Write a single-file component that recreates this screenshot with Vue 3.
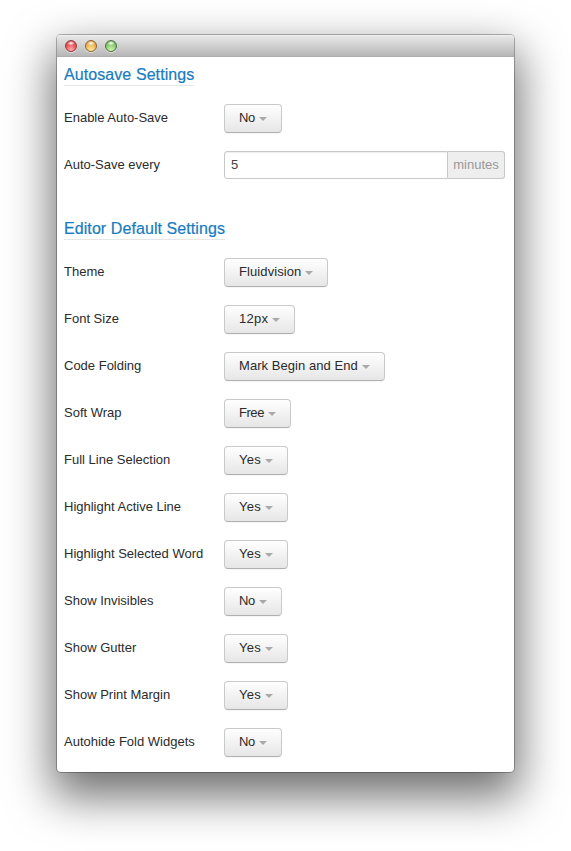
<script setup>
const sections = [
  {
    title: 'Autosave Settings',
    rows: [
      { label: 'Enable Auto-Save', value: 'No' },
      { label: 'Auto-Save every', input: '5', unit: 'minutes' },
    ],
  },
  {
    title: 'Editor Default Settings',
    rows: [
      { label: 'Theme', value: 'Fluidvision' },
      { label: 'Font Size', value: '12px' },
      { label: 'Code Folding', value: 'Mark Begin and End' },
      { label: 'Soft Wrap', value: 'Free' },
      { label: 'Full Line Selection', value: 'Yes' },
      { label: 'Highlight Active Line', value: 'Yes' },
      { label: 'Highlight Selected Word', value: 'Yes' },
      { label: 'Show Invisibles', value: 'No' },
      { label: 'Show Gutter', value: 'Yes' },
      { label: 'Show Print Margin', value: 'Yes' },
      { label: 'Autohide Fold Widgets', value: 'No' },
    ],
  },
]

const tracking = {
  No: -0.4,
  Yes: 0.3,
  Free: -0.45,
  '12px': 0.25,
  Fluidvision: 0.09,
  'Mark Begin and End': 0.06,
}
</script>

<template>
  <div class="desktop">
    <main class="window">
      <header class="titlebar">
        <i class="light red"></i>
        <i class="light yellow"></i>
        <i class="light green"></i>
      </header>
      <section v-for="s in sections" :key="s.title" class="section">
        <h2 class="heading">{{ s.title }}</h2>
        <div v-for="r in s.rows" :key="r.label" class="row">
          <span class="label">{{ r.label }}</span>
          <button v-if="r.value" class="select">
            <span :style="{ letterSpacing: tracking[r.value] + 'px' }">{{ r.value }}</span>
            <i class="caret"></i>
          </button>
          <div v-else class="group">
            <input class="field" type="text" :value="r.input" />
            <span class="unit">{{ r.unit }}</span>
          </div>
        </div>
      </section>
    </main>
  </div>
</template>

<style>
body {
  background: #fff;
  overflow: hidden;
}
</style>

<style scoped>
.desktop {
  box-sizing: border-box;
  width: 571px;
  height: 851px;
  padding: 35px 57px 0;
  overflow: hidden;
  background: #fff;
  font-family: 'Liberation Sans', Arial, sans-serif;
  font-size: 13px;
  color: #2b2b2b;
}
.window {
  width: 457px;
  height: 737px;
  border-radius: 4px;
  background: #fff;
  box-shadow: 0 0 0 1px rgba(0, 0, 0, 0.28), 0 20px 45px 5px rgba(0, 0, 0, 0.56);
}
.titlebar {
  box-sizing: border-box;
  display: flex;
  gap: 8px;
  height: 22px;
  padding: 5px 8px 0;
  border-radius: 4px 4px 0 0;
  border-bottom: 1px solid #adadad;
  background: linear-gradient(#e9e9e9, #b7b7b7);
  box-shadow: inset 0 1px 0 #f0f0f0;
}
.light {
  box-sizing: border-box;
  width: 12px;
  height: 12px;
  border-radius: 50%;
  box-shadow: 0 1px 0 rgba(255, 255, 255, 0.5);
}
.red {
  border: 1px solid #97393d;
  background: radial-gradient(ellipse 4px 2.5px at 50% 22%, #fff, transparent), radial-gradient(circle at 50% 90%, #ffb1ae, #e8545a 55%, #bd3439);
}
.yellow {
  border: 1px solid #8f6430;
  background: radial-gradient(ellipse 4px 2.5px at 50% 22%, #fff, transparent), radial-gradient(circle at 50% 90%, #ffeaa0, #f0b657 55%, #c98632);
}
.green {
  border: 1px solid #4c7540;
  background: radial-gradient(ellipse 4px 2.5px at 50% 22%, #fff, transparent), radial-gradient(circle at 50% 90%, #d2f5b0, #8cc972 55%, #5c9b46);
}
.section {
  display: flex;
  flex-direction: column;
  align-items: flex-start;
  padding: 8px 7px 0;
  margin-bottom: 22px;
}
.heading {
  margin: 0 0 9px;
  height: 20px;
  border-bottom: 1px solid #e6e6e6;
  color: #187bc0;
  font-size: 16px;
  font-weight: 400;
  line-height: 19px;
  letter-spacing: 0.08px;
  white-space: nowrap;
  -webkit-text-stroke: 0.2px #187bc0;
}
.row {
  display: grid;
  grid-template-columns: 160px 281px;
  align-items: center;
  height: 47px;
}
.label {
  line-height: 20px;
  margin-top: -2px;
  white-space: nowrap;
}
.select {
  display: flex;
  justify-self: start;
  align-items: center;
  gap: 4px;
  box-sizing: border-box;
  height: 29px;
  padding: 0 14px 2px;
  border: 1px solid #c9c9c9;
  border-bottom-color: #b0b0b0;
  border-radius: 4px;
  background: linear-gradient(#fff, #e6e6e6);
  box-shadow: 0 1px 1px rgba(0, 0, 0, 0.04);
  color: #2b2b2b;
  font: inherit;
  white-space: nowrap;
}
.caret {
  margin-top: 3px;
  border: 4px solid transparent;
  border-top-color: #a9a9a9;
  border-bottom: 0;
}
.group {
  display: flex;
  height: 28px;
  margin-bottom: 2px;
}
.field {
  box-sizing: border-box;
  width: 224px;
  padding: 0 6px 1px;
  border: 1px solid #c8c8c8;
  border-radius: 3px 0 0 3px;
  background: #fff;
  box-shadow: inset 0 1px 1px rgba(0, 0, 0, 0.07);
  color: #444;
  font: inherit;
}
.unit {
  box-sizing: border-box;
  width: 57px;
  border: 1px solid #c8c8c8;
  border-left: 0;
  border-radius: 0 3px 3px 0;
  background: #eee;
  color: #999;
  line-height: 25px;
  text-align: center;
}
</style>
